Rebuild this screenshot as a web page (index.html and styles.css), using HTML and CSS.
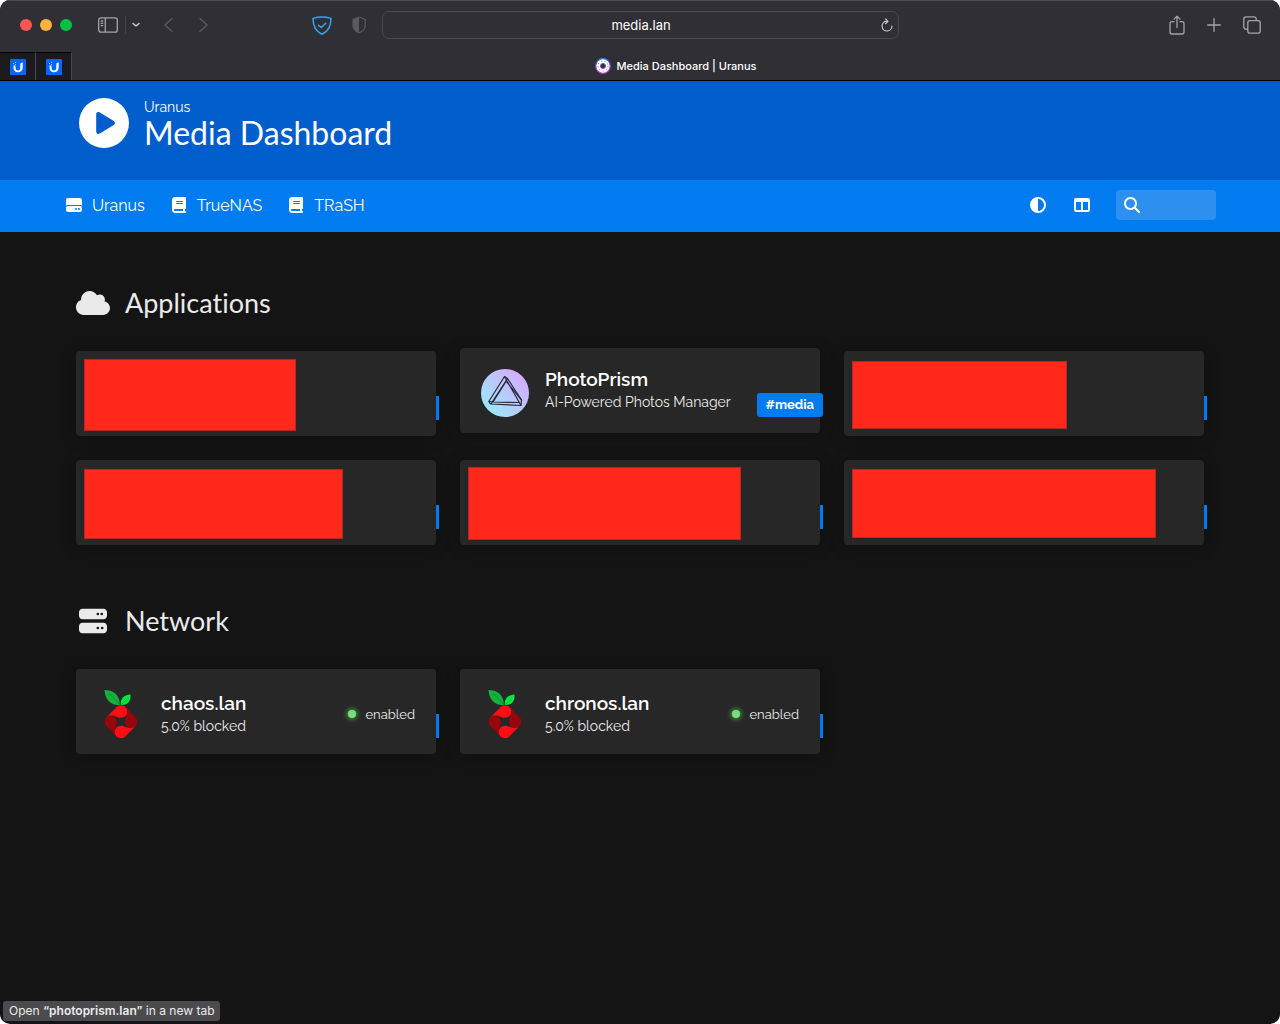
FILE: index.html
```html
<!DOCTYPE html>
<html lang="en">
<head>
<meta charset="utf-8">
<title>Media Dashboard | Uranus</title>
<link rel="stylesheet" href="styles.css">
</head>

<body>
<!-- shared icons -->
<svg class="defs" aria-hidden="true">
    <symbol id="book" viewBox="0 0 448 512"><path d="M96 0C43 0 0 43 0 96V416c0 53 43 96 96 96H384h32c17.700 0 32-14.300 32-32s-14.300-32-32-32V384c17.700 0 32-14.300 32-32V32c0-17.700-14.300-32-32-32H384 96zm0 384H352v64H96c-17.700 0-32-14.300-32-32s14.300-32 32-32zm32-240c0-8.800 7.200-16 16-16H336c8.800 0 16 7.200 16 16s-7.200 16-16 16H144c-8.800 0-16-7.200-16-16zm16 48H336c8.800 0 16 7.200 16 16s-7.200 16-16 16H144c-8.800 0-16-7.200-16-16s7.200-16 16-16z"/></symbol>
    <symbol id="pihole" viewBox="0 0 34 48">
        <path fill="#12b23b" d="M.5 0C9 0 15.500 4.500 16 15.300C7 15.500 1 10 .5 0Z"/>
        <path fill="none" stroke="#0b7d2a" stroke-width=".8" d="M5 4C9 7 13 10 15.500 15"/>
        <path fill="#00e83c" d="M26.500 4.500C27 11 24 15.500 16.800 15C16.300 8.500 19.500 5 26.500 4.500Z"/>
        <path fill="none" stroke="#12b23b" stroke-width=".7" d="M24 8L17 15"/>
        <g fill="#96060c">
            <path d="M2.400 27.300L12.500 17.200A6.300 6.300 0 0 1 23.300 21.500A6.200 6.200 0 0 1 17 27.700C13.500 27.700 12 25.400 7 25.400C5 25.400 3.500 26.100 2.400 27.300Z" transform="rotate(90 17 31.700)"/>
            <path d="M2.400 27.300L12.500 17.200A6.300 6.300 0 0 1 23.300 21.500A6.200 6.200 0 0 1 17 27.700C13.500 27.700 12 25.400 7 25.400C5 25.400 3.500 26.100 2.400 27.300Z" transform="rotate(270 17 31.700)"/>
        </g>
        <g fill="#ff0d16">
            <path d="M2.400 27.300L12.500 17.200A6.300 6.300 0 0 1 23.300 21.500A6.200 6.200 0 0 1 17 27.700C13.500 27.700 12 25.400 7 25.400C5 25.400 3.500 26.100 2.400 27.300Z"/>
            <path d="M2.400 27.300L12.500 17.200A6.300 6.300 0 0 1 23.300 21.500A6.200 6.200 0 0 1 17 27.700C13.500 27.700 12 25.400 7 25.400C5 25.400 3.500 26.100 2.400 27.300Z" transform="rotate(180 17 31.700)"/>
        </g>
    </symbol>
    <symbol id="unifi" viewBox="0 0 16 16">
        <rect width="16" height="16" rx="1" fill="#0566ff"/>
        <path fill="#fff" d="M3.500 6.500H5.500V8.500C5.500 10.500 6.500 11.300 8 11.500C9.500 11.200 10.300 10.500 10.300 8.500V4.500L12.700 3.300V8.500C12.700 11.500 10.800 13.200 8 13.200C5.200 13.200 3.500 11.500 3.500 8.500Z"/>
        <path fill="#9cc4ff" d="M3 4h1v1H3zM5 3h1v1H5zM5 5h1v1H5z"/>
    </symbol>
</svg>

<div class="window">
    <div class="toolbar">
        <div class="tools-left">
            <div class="lights">
                <span class="light red"></span>
                <span class="light yellow"></span>
                <span class="light green"></span>
            </div>
            <button class="tool" aria-label="Sidebar">
                <svg width="20" height="16" viewBox="0 0 20 16" fill="none" stroke="#a5a4a9" stroke-width="1.300"><rect x=".7" y=".9" width="18.600" height="14.200" rx="2.200"/><path d="M7.300 1v14M2.700 4h2.500M2.700 6.300h2.500M2.700 8.600h2.500"/></svg>
            </button>
            <button class="tool tool-menu" aria-label="Tab groups">
                <svg width="8" height="6" viewBox="0 0 8 6" fill="none" stroke="#c8c7cb" stroke-width="1.600" stroke-linecap="round" stroke-linejoin="round"><path d="M1 1.500L4 4L7 1.500"/></svg>
            </button>
            <div class="history">
                <button class="tool" aria-label="Back">
                    <svg width="9" height="16" viewBox="0 0 9 16" fill="none" stroke="#5a595f" stroke-width="1.400" stroke-linecap="round" stroke-linejoin="round"><path d="M8 1.500L1 8L8 14.500"/></svg>
                </button>
                <button class="tool" aria-label="Forward">
                    <svg width="9" height="16" viewBox="0 0 9 16" fill="none" stroke="#5a595f" stroke-width="1.400" stroke-linecap="round" stroke-linejoin="round"><path d="M1 1.500L8 8L1 14.500"/></svg>
                </button>
            </div>
            <div class="shields">
                <button class="tool" aria-label="Ad blocker">
                    <svg width="20" height="19" viewBox="0 0 20 19" fill="none" stroke="#35a5f3" stroke-width="1.500" stroke-linecap="round" stroke-linejoin="round"><path d="M10 1C13 1 16 1.500 19 2.400C19 10 16.800 15 10 18.200C3.200 15 1 10 1 2.400C4 1.500 7 1 10 1Z"/><path d="M6.500 9.300L9.300 11.500L13.700 7.200"/></svg>
                </button>
                <button class="tool" aria-label="Privacy report">
                    <svg width="14" height="18" viewBox="0 0 14 18" fill="#5a595f"><path d="M7 .5L.5 3V10C.5 13.500 4 16 7 17.500Z"/><path fill="none" stroke="#5a595f" stroke-width="1.200" d="M7 1L13.200 3.400V10C13.200 13.200 10 15.500 7 16.900"/></svg>
                </button>
            </div>
        </div>
        <div class="address">
            <input class="address-input" type="text" value="media.lan" aria-label="Address">
            <button class="reload" aria-label="Reload">
                <svg width="12" height="14" viewBox="0 0 12 14" fill="none" stroke="#c8c7cb" stroke-width="1.200" stroke-linecap="round" stroke-linejoin="round"><path d="M5.500 3.200A4.900 4.900 0 1 0 10.900 8M4.500 .8L7 3.300L4.500 5.700"/></svg>
            </button>
        </div>
        <div class="tools-right">
            <button class="tool" aria-label="Share">
                <svg width="16" height="20" viewBox="0 0 16 20" fill="none" stroke="#a5a4a9" stroke-width="1.300" stroke-linecap="round" stroke-linejoin="round"><path d="M5 6.700H3A2 2 0 0 0 1 8.700V17A2 2 0 0 0 3 19H13A2 2 0 0 0 15 17V8.700A2 2 0 0 0 13 6.700H11M8 12.500V1.300M5 4.100L8 1.100L11 4.100"/></svg>
            </button>
            <button class="tool" aria-label="New tab">
                <svg width="14" height="14" viewBox="0 0 14 14" fill="none" stroke="#a5a4a9" stroke-width="1.300" stroke-linecap="round"><path d="M7 .7V13.300M.7 7H13.300"/></svg>
            </button>
            <button class="tool" aria-label="Tab overview">
                <svg width="18" height="18" viewBox="0 0 18 18" fill="none" stroke="#a5a4a9" stroke-width="1.300"><path d="M4.800 13.200H3A2.200 2.200 0 0 1 .8 11V3A2.200 2.200 0 0 1 3 .8H11A2.200 2.200 0 0 1 13.200 3V4.500"/><rect x="4.800" y="4.700" width="12.400" height="12.400" rx="2.200"/></svg>
            </button>
        </div>
    </div>

    <div class="tabs">
        <button class="pinned" aria-label="UniFi"><svg width="16" height="16"><use href="#unifi"/></svg></button>
        <button class="pinned" aria-label="UniFi"><svg width="16" height="16"><use href="#unifi"/></svg></button>
        <button class="tab">
            <svg width="16" height="16" viewBox="0 0 16 16">
                <defs><linearGradient id="ring" x1="0" y1="0" x2="0" y2="1"><stop offset="0" stop-color="#2387ea"/><stop offset=".5" stop-color="#6a4bc8"/><stop offset="1" stop-color="#c13fd6"/></linearGradient></defs>
                <circle cx="8" cy="8" r="7.300" fill="#fff" stroke="url(#ring)" stroke-width="1.200"/>
                <circle cx="8" cy="8" r="5" fill="none" stroke="url(#ring)" stroke-dasharray="1 2.500"/>
                <circle cx="8" cy="8" r="2.500" fill="#302f35" stroke="#6a4bc8"/>
            </svg>
            Media Dashboard | Uranus
        </button>
    </div>

    <header class="header">
        <div class="container brand">
            <svg class="logo" viewBox="0 0 512 512" fill="#fff"><path d="M0 256a256 256 0 1 1 512 0A256 256 0 1 1 0 256zM188.300 147.100c-7.600 4.200-12.300 12.300-12.300 20.900V344c0 8.700 4.700 16.700 12.300 20.900s16.800 4.100 24.300-.5l144-88c7.100-4.400 11.500-12.100 11.500-20.500s-4.400-16.100-11.500-20.500l-144-88c-7.400-4.500-16.700-4.700-24.300-.5z"/></svg>
            <div class="brand-text">
                <span class="brand-sub">Uranus</span>
                <h1>Media Dashboard</h1>
            </div>
        </div>
    </header>

    <nav class="navbar">
        <div class="container nav-row">
            <a class="nav-link" href="#">
                <svg class="nav-icon" viewBox="0 0 512 512"><path d="M0 96C0 60.700 28.700 32 64 32H448c35.300 0 64 28.700 64 64V280.400c-17-15.200-39.400-24.400-64-24.400H64c-24.600 0-47 9.200-64 24.400V96zM64 288H448c35.300 0 64 28.700 64 64v64c0 35.300-28.700 64-64 64H64c-35.300 0-64-28.700-64-64V352c0-35.300 28.700-64 64-64zM320 416a32 32 0 1 0 0-64 32 32 0 1 0 0 64zm128-32a32 32 0 1 0 -64 0 32 32 0 1 0 64 0z"/></svg>
                Uranus
            </a>
            <a class="nav-link" href="#"><svg class="nav-icon"><use href="#book"/></svg>TrueNAS</a>
            <a class="nav-link" href="#"><svg class="nav-icon"><use href="#book"/></svg>TRaSH</a>
            <div class="nav-end">
                <button class="nav-button" aria-label="Toggle theme"><svg class="nav-icon" viewBox="0 0 512 512"><path d="M448 256c0-106-86-192-192-192V448c106 0 192-86 192-192zM0 256a256 256 0 1 1 512 0A256 256 0 1 1 0 256z"/></svg></button>
                <button class="nav-button" aria-label="Toggle layout"><svg class="nav-icon" viewBox="0 0 512 512"><path d="M0 96C0 60.700 28.700 32 64 32H448c35.300 0 64 28.700 64 64V416c0 35.300-28.700 64-64 64H64c-35.300 0-64-28.700-64-64V96zm64 64V416H224V160H64zm384 0H288V416H448V160z"/></svg></button>
                <label class="search">
                    <svg class="nav-icon" viewBox="0 0 512 512"><path d="M416 208c0 45.900-14.900 88.300-40 122.700L502.600 457.400c12.500 12.500 12.500 32.800 0 45.300s-32.800 12.500-45.300 0L330.700 376c-34.400 25.200-76.800 40-122.700 40C93.100 416 0 322.900 0 208S93.100 0 208 0S416 93.100 416 208zM208 352a144 144 0 1 0 0-288 144 144 0 1 0 0 288z"/></svg>
                    <input type="text" aria-label="Search">
                </label>
            </div>
        </div>
    </nav>

    <main class="container">
        <section class="group">
            <h2>
                <svg class="group-icon cloud" viewBox="0 0 640 512"><path d="M0 336c0 79.500 64.500 144 144 144H512c70.700 0 128-57.300 128-128c0-61.900-44-113.600-102.400-125.400c4.100-10.700 6.400-22.400 6.400-34.600c0-53-43-96-96-96c-19.700 0-38.100 6-53.300 16.200C367 64.200 315.300 32 256 32C167.600 32 96 103.600 96 192c0 2.700 .1 5.400 .2 8.100C40.200 219.800 0 273.200 0 336z"/></svg>
                Applications
            </h2>
            <div class="cards">
                <a class="card hidden-card" href="#"><span class="cover cover-a"></span><span class="tag"></span></a>
                <a class="card active" href="#">
                    <svg class="card-icon" viewBox="0 0 48 48">
                        <defs><linearGradient id="prism" x1="0" y1="1" x2="1" y2="0"><stop offset=".1" stop-color="#96ecff"/><stop offset=".9" stop-color="#d8a8ff"/></linearGradient></defs>
                        <circle cx="24" cy="24" r="24" fill="url(#prism)"/>
                        <g fill="none" stroke="#2b2838" stroke-width="1.200" stroke-linejoin="round"><path d="M23.500 7.500L7.800 32.500L9.500 35L40 36.500L40.500 31L26.500 9.500Z"/><path d="M25 12.500L12 33L38.500 33.500M23.500 7.500L40 36.500M26.500 9.500L10 34.800M25.500 12.500L40.500 31M7.800 32.500L12 33"/></g>
                    </svg>
                    <span class="card-text">
                        <span class="card-title">PhotoPrism</span>
                        <span class="card-sub">AI-Powered Photos Manager</span>
                    </span>
                    <span class="tag tag-open">#media</span>
                </a>
                <a class="card hidden-card" href="#"><span class="cover cover-b"></span><span class="tag"></span></a>
                <a class="card hidden-card" href="#"><span class="cover cover-c"></span><span class="tag"></span></a>
                <a class="card hidden-card" href="#"><span class="cover cover-d"></span><span class="tag"></span></a>
                <a class="card hidden-card" href="#"><span class="cover cover-e"></span><span class="tag"></span></a>
            </div>
        </section>

        <section class="group">
            <h2>
                <svg class="group-icon" viewBox="0 0 512 512"><path d="M64 32C28.700 32 0 60.700 0 96v64c0 35.300 28.700 64 64 64H448c35.300 0 64-28.700 64-64V96c0-35.300-28.700-64-64-64H64zm280 72a24 24 0 1 1 0 48 24 24 0 1 1 0-48zm48 24a24 24 0 1 1 48 0 24 24 0 1 1 -48 0zM64 288c-35.300 0-64 28.700-64 64v64c0 35.300 28.700 64 64 64H448c35.300 0 64-28.700 64-64V352c0-35.300-28.700-64-64-64H64zm280 72a24 24 0 1 1 0 48 24 24 0 1 1 0-48zm56 24a24 24 0 1 1 48 0 24 24 0 1 1 -48 0z"/></svg>
                Network
            </h2>
            <div class="cards">
                <a class="card service" href="#">
                    <svg class="card-icon"><use href="#pihole"/></svg>
                    <span class="card-text">
                        <span class="card-title">chaos.lan</span>
                        <span class="card-sub">5.0% blocked</span>
                    </span>
                    <span class="status">enabled</span>
                    <span class="tag"></span>
                </a>
                <a class="card service" href="#">
                    <svg class="card-icon"><use href="#pihole"/></svg>
                    <span class="card-text">
                        <span class="card-title">chronos.lan</span>
                        <span class="card-sub">5.0% blocked</span>
                    </span>
                    <span class="status">enabled</span>
                    <span class="tag"></span>
                </a>
            </div>
        </section>
    </main>

    <div class="statusbar">Open <b>“photoprism.lan”</b> in a new tab</div>
</div>
</body>
</html>
```
FILE: styles.css
```css
* {
    box-sizing: border-box;
}
body {
    margin: 0;
    background: #fff;
    font-family: Raleway, Lato, sans-serif;
    color: #eaeaea;
}
button {
    border: 0;
    padding: 0;
    background: none;
    color: inherit;
}
input {
    border: 0;
    background: none;
    color: inherit;
    min-width: 0;
}
a {
    color: inherit;
    text-decoration: none;
}
svg {
    display: block;
    flex: none;
}
.defs {
    position: absolute;
    width: 0;
    height: 0;
}
.window {
    position: relative;
    min-height: 100vh;
    border-radius: 10px;
    overflow: hidden;
    background: #141414;
}

/* browser bar */
.toolbar {
    display: grid;
    grid-template-columns: 1fr minmax(0, 517px) 1fr;
    align-items: center;
    height: 52px;
    padding-bottom: 3px;
    border-top: 1px solid #4c4b50;
    background: #302f35;
    font-family: Inter, sans-serif;
}
.tools-left {
    display: flex;
    align-items: center;
    padding: 0 16px 0 20px;
}
.lights {
    display: flex;
    gap: 8px;
    margin-right: 26px;
}
.light {
    width: 12px;
    height: 12px;
    border-radius: 50%;
}
.red {
    background: #ff5650;
}
.yellow {
    background: #ffb13d;
}
.green {
    background: #00c140;
}
.tool-menu {
    display: flex;
    align-items: center;
    height: 18px;
    margin-left: 7px;
    padding-left: 6px;
    border-left: 1px solid #434248;
}
.history {
    display: flex;
    gap: 26px;
    margin-left: 24px;
}
.shields {
    display: flex;
    align-items: center;
    gap: 20px;
    margin-left: auto;
}
.address {
    display: flex;
    align-items: center;
    height: 28px;
    padding: 0 5px 0 19px;
    border: 1px solid #4a494f;
    border-radius: 7px;
}
.address-input {
    flex: 1;
    text-align: center;
    font: 400 13px/16px Inter, sans-serif;
    color: #fff;
}
.tools-right {
    display: flex;
    align-items: center;
    justify-content: flex-end;
    gap: 22px;
    padding-right: 19px;
}
.tabs {
    display: flex;
    height: 29px;
    border-bottom: 1px solid #000;
    background: #302f35;
}
.pinned {
    display: flex;
    align-items: center;
    justify-content: center;
    width: 36px;
    border-top: 1px solid #000;
    border-right: 1px solid #4a494f;
    background: #1b1a1f;
}
.tab {
    display: flex;
    flex: 1;
    align-items: center;
    justify-content: center;
    gap: 5px;
    font: 500 11px/16px Inter, sans-serif;
    color: #fff;
}

/* page header */
.container {
    max-width: 1152px;
    margin: 0 auto;
}
.header {
    background: #005dcc;
}
.brand {
    display: flex;
    height: 99px;
    padding: 17px 15px 0;
}
.logo {
    width: 50px;
    height: 50px;
    margin-right: 15px;
}
.brand-sub {
    display: block;
    font-size: 14px;
    font-weight: 400;
    line-height: 18px;
    color: #fff;
}
h1 {
    margin: 0;
    font: 400 32px/34px Lato, sans-serif;
    color: #fff;
}
.navbar {
    background: #007bf0;
    color: #fff;
}
.nav-row {
    display: flex;
    align-items: center;
    height: 52px;
    gap: 24px;
    padding-bottom: 2px;
}
.nav-link {
    display: flex;
    align-items: center;
    gap: 8px;
    font-size: 16px;
}
.nav-icon {
    width: 20px;
    height: 16px;
    fill: #fff;
}
.nav-end {
    display: flex;
    align-items: center;
    gap: 24px;
    margin-left: auto;
}
.search {
    display: flex;
    align-items: center;
    width: 100px;
    height: 30px;
    padding: 0 6px;
    border-radius: 4px;
    background: #2d8ff0;
}
.search input {
    width: 100%;
}

/* cards */
.group {
    padding: 0 12px;
}
h2 {
    display: flex;
    align-items: center;
    gap: 18px;
    margin: 0 0 30px;
    padding-top: 53px;
    font: 400 27px/36px Lato, sans-serif;
    font-variant-ligatures: none;
}
.group + .group h2 {
    padding-top: 58px;
}
.group-icon {
    width: 28px;
    height: 28px;
    margin: 0 0 0 3px;
    fill: #eaeaea;
}
.group-icon.cloud {
    width: 34px;
    margin: 0 -3px 0 0;
}
.cards {
    display: grid;
    grid-template-columns: repeat(3, 1fr);
    gap: 24px;
}
.card {
    position: relative;
    display: flex;
    gap: 16px;
    min-height: 85px;
    padding: 21px 21px 16px;
    border-radius: 4px;
    background: #272727;
    box-shadow: 0 2px 15px rgba(0, 0, 0, .3);
}
.card.active {
    transform: translateY(-3px);
}
.hidden-card {
    align-items: center;
    padding: 2px 8px 0;
}
.cover {
    border: 1px solid #b52a20;
    background: #ff281a;
}
.cover-a {
    width: 212px;
    height: 72px;
}
.cover-b {
    width: 215px;
    height: 68px;
}
.cover-c {
    width: 259px;
    height: 70px;
}
.cover-d {
    width: 273px;
    height: 73px;
}
.cover-e {
    width: 304px;
    height: 69px;
}
.card-icon {
    width: 48px;
    height: 48px;
}
.card-text {
    flex: 1;
}
.service .card-text {
    padding-top: 3px;
}
.card-title {
    display: block;
    font-size: 19px;
    font-weight: 600;
    line-height: 21px;
    color: #fff;
}
.card-sub {
    display: block;
    font-size: 14px;
    line-height: 24px;
}
.status {
    display: flex;
    align-items: center;
    align-self: center;
    gap: 9px;
    font-size: 13px;
}
.status::before {
    content: "";
    width: 8px;
    height: 8px;
    border-radius: 50%;
    background: #78de7c;
    box-shadow: 0 0 5px 1px #4fb053;
}
.tag {
    position: absolute;
    right: -3px;
    bottom: 16px;
    width: 3px;
    height: 24px;
    background: #007bf0;
}
.tag-open {
    width: auto;
    padding: 0 9px;
    border-radius: 3px;
    font-size: 13px;
    font-weight: 700;
    line-height: 24px;
    color: #fff;
}
.statusbar {
    position: absolute;
    left: 3px;
    bottom: 3px;
    padding: 2px 6px;
    border-radius: 3px;
    background: #4b4b4d;
    font: 400 12px/16px Inter, sans-serif;
}
.statusbar b {
    font-weight: 600;
}
```
